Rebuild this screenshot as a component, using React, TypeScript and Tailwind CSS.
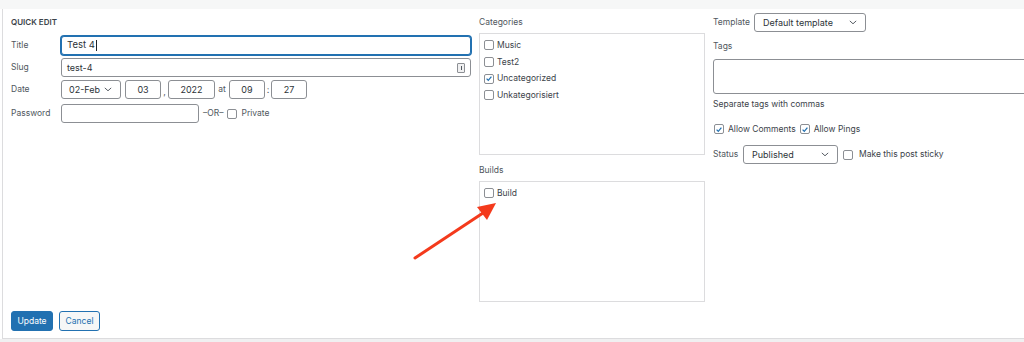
import React from "react";

const font = { fontFamily: "Inter, 'Liberation Sans', sans-serif" };

function Check({ checked = false }: { checked?: boolean }) {
  return (
    <span className="flex h-[10px] w-[10px] shrink-0 items-center justify-center rounded-[2px] border border-[#8c8f94] bg-white">
      {checked && (
        <svg viewBox="0 0 10 10" className="h-[9px] w-[9px]">
          <path d="M2 5.2 L4.1 7.3 L8 2.6" fill="none" stroke="#2271b1" strokeWidth="1.6" />
        </svg>
      )}
    </span>
  );
}

function Chevron() {
  return (
    <svg viewBox="0 0 10 6" className="h-[5px] w-[8px]">
      <path d="M1 1 L5 4.6 L9 1" fill="none" stroke="#50575e" strokeWidth="1.2" />
    </svg>
  );
}

function Field({ className, children }: { className: string; children?: React.ReactNode }) {
  return (
    <div
      className={`flex h-[19px] items-center rounded-[3px] border border-[#8c8f94] bg-white text-[9px] text-[#2c3338] ${className}`}
    >
      {children}
    </div>
  );
}

function CheckItem({ label, checked }: { label: string; checked?: boolean }) {
  return (
    <div className="flex h-[16.7px] items-center gap-[3px] text-[8.5px] text-[#3c434a]">
      <Check checked={checked} />
      <span>{label}</span>
    </div>
  );
}

export default function App() {
  return (
    <div className="relative h-[342px] w-[1024px] overflow-hidden bg-white" style={font}>
      <div className="h-[9px] bg-[#f6f7f7]" />
      <div className="ml-[2px] h-[330px] border-b border-l border-[#dcdcde] pl-[8px]">
        <div className="flex h-[293px] gap-[8px]">
          {/* left column */}
          <div className="w-[460px] shrink-0">
            <div className="mt-[7px] flex h-[12px] items-center text-[8px] font-semibold text-[#3c434a]">
              QUICK EDIT
            </div>
            <div className="mt-[8px] flex items-center">
              <span className="w-[50px] text-[8.5px] text-[#50575e]">Title</span>
              <Field className="w-[410px] border-[#2271b1] px-[5px] shadow-[0_0_0_1px_#2271b1]">
                <span className="text-[9.5px]">Test 4</span>
                <span className="ml-[1px] h-[11px] w-px bg-[#1d2327]" />
              </Field>
            </div>
            <div className="mt-[3px] flex items-center">
              <span className="w-[50px] text-[8.5px] text-[#50575e]">Slug</span>
              <Field className="w-[410px] justify-between px-[5px]">
                <span>test-4</span>
                <span className="flex h-[10px] w-[8px] items-center justify-center rounded-[1px] border border-[#8c8f94] bg-[#f0f0f1]">
                  <span className="h-[4px] w-px bg-[#50575e]" />
                </span>
              </Field>
            </div>
            <div className="mt-[3px] flex items-center">
              <span className="w-[50px] text-[8.5px] text-[#50575e]">Date</span>
              <Field className="w-[60px] justify-between pl-[7px] pr-[8px]">
                <span>02-Feb</span>
                <Chevron />
              </Field>
              <Field className="ml-[4px] w-[36px] justify-center">03</Field>
              <span className="w-[7px] pt-[4px] text-center text-[9px] text-[#50575e]">,</span>
              <Field className="w-[47px] justify-center">2022</Field>
              <span className="w-[14px] text-center text-[8.5px] text-[#50575e]">at</span>
              <Field className="w-[36px] justify-center">09</Field>
              <span className="w-[6px] text-center text-[9px] text-[#50575e]">:</span>
              <Field className="w-[36px] justify-center">27</Field>
            </div>
            <div className="mt-[5px] flex items-center">
              <span className="w-[50px] text-[8.5px] text-[#50575e]">Password</span>
              <Field className="w-[138px]" />
              <span className="ml-[4px] text-[8.5px] text-[#50575e]">–OR–</span>
              <span className="ml-[4px]">
                <Check />
              </span>
              <span className="ml-[4px] text-[8.5px] text-[#50575e]">Private</span>
            </div>
          </div>

          {/* middle column */}
          <div className="w-[226px] shrink-0">
            <div className="mt-[7px] flex h-[12px] items-center text-[8.5px] text-[#50575e]">Categories</div>
            <div className="mt-[5px] h-[122px] border border-[#dcdcde] bg-white px-[4px] pt-[3px]">
              <CheckItem label="Music" />
              <CheckItem label="Test2" />
              <CheckItem label="Uncategorized" checked />
              <CheckItem label="Unkategorisiert" />
            </div>
            <div className="mt-[9px] flex h-[12px] items-center text-[8.5px] text-[#50575e]">Builds</div>
            <div className="mt-[5px] h-[121px] border border-[#dcdcde] bg-white px-[4px] pt-[3px]">
              <CheckItem label="Build" />
            </div>
          </div>

          {/* right column */}
          <div className="min-w-0 flex-1">
            <div className="mt-[4px] flex items-center">
              <span className="w-[41px] text-[8.5px] text-[#50575e]">Template</span>
              <Field className="w-[112px] justify-between pl-[8px] pr-[8px]">
                <span>Default template</span>
                <Chevron />
              </Field>
            </div>
            <div className="mt-[8px] flex h-[12px] items-center text-[8.5px] text-[#50575e]">Tags</div>
            <div className="mt-[7px] h-[35px] w-[400px] rounded-[3px] border border-[#8c8f94] bg-white" />
            <div className="mt-[4px] flex h-[12px] items-center text-[8.5px] text-[#3c434a]">
              Separate tags with commas
            </div>
            <div className="mt-[13px] flex h-[12px] items-center text-[8.5px] text-[#3c434a]">
              <span className="ml-px">
                <Check checked />
              </span>
              <span className="ml-[4px]">Allow Comments</span>
              <span className="ml-[4px]">
                <Check checked />
              </span>
              <span className="ml-[4px]">Allow Pings</span>
            </div>
            <div className="mt-[10px] flex items-center">
              <span className="w-[30px] text-[8.5px] text-[#50575e]">Status</span>
              <Field className="w-[95px] justify-between pl-[8px] pr-[8px]">
                <span>Published</span>
                <Chevron />
              </Field>
              <span className="ml-[5px]">
                <Check />
              </span>
              <span className="ml-[6px] text-[8.5px] text-[#3c434a]">Make this post sticky</span>
            </div>
          </div>
        </div>

        <div className="mt-[9px] flex gap-[6px]">
          <button className="h-[20px] w-[42px] rounded-[3px] border border-[#2271b1] bg-[#2271b1] text-[8.5px] text-white">
            Update
          </button>
          <button className="h-[20px] w-[41px] rounded-[3px] border border-[#2271b1] bg-[#f6f7f7] text-[8.5px] text-[#2271b1]">
            Cancel
          </button>
        </div>
      </div>
      <div className="h-[3px] bg-[#f0f0f1]" />

      {/* annotation arrow */}
      <svg className="pointer-events-none absolute left-0 top-0" width="1024" height="342">
        <line x1="415" y1="258" x2="486" y2="211" stroke="#f43a1c" strokeWidth="3" strokeLinecap="round" />
        <polygon points="496,203 477,207 487,220" fill="#f43a1c" />
      </svg>
    </div>
  );
}
